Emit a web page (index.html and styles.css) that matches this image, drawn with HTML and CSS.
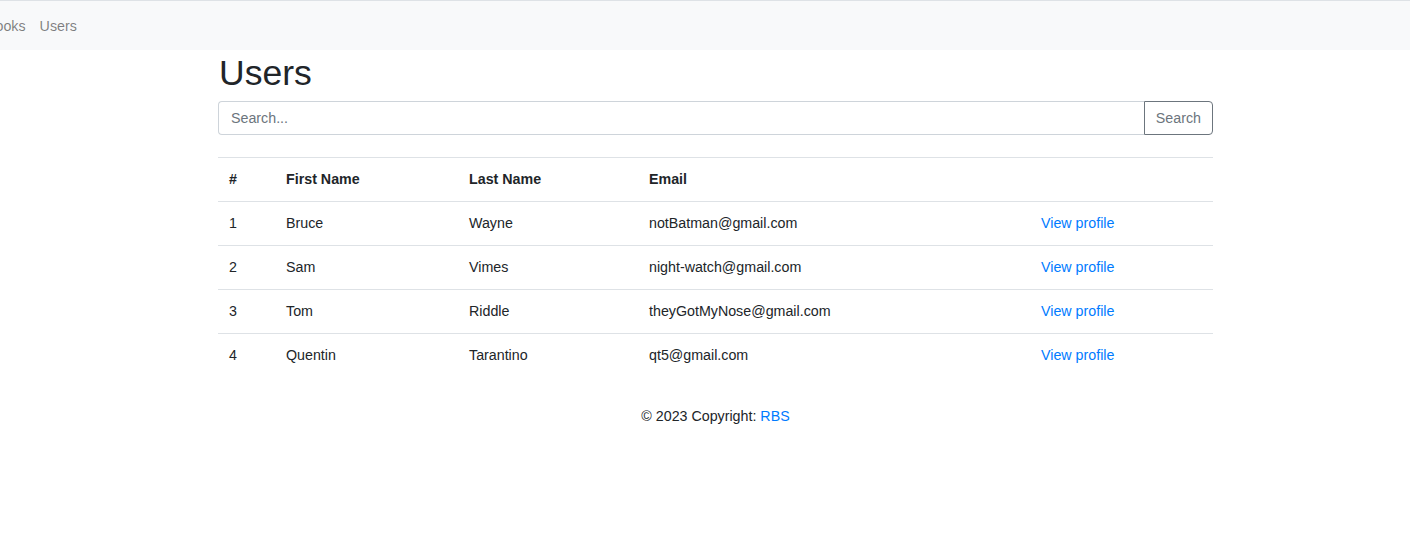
FILE: index.html
```html
<!DOCTYPE html>
<html lang="en">
<head>
<meta charset="utf-8">
<title>Users</title>
<link rel="stylesheet" href="styles.css">
</head>
<body>
<nav class="navbar">
  <ul class="nav-list">
    <li><a class="nav-link" href="#">Books</a></li>
    <li><a class="nav-link" href="#">Users</a></li>
  </ul>
</nav>
<main class="container">
  <h1 class="title">Users</h1>
  <form class="input-group">
    <input class="form-control" type="text" placeholder="Search...">
    <button class="btn-search" type="button">Search</button>
  </form>
  <table class="table">
    <thead>
      <tr>
        <th class="c-num">#</th>
        <th class="c-first">First Name</th>
        <th class="c-last">Last Name</th>
        <th class="c-email">Email</th>
        <th class="c-link"></th>
      </tr>
    </thead>
    <tbody>
      <tr><td>1</td><td>Bruce</td><td>Wayne</td><td>notBatman@gmail.com</td><td><a href="#">View profile</a></td></tr>
      <tr><td>2</td><td>Sam</td><td>Vimes</td><td>night-watch@gmail.com</td><td><a href="#">View profile</a></td></tr>
      <tr><td>3</td><td>Tom</td><td>Riddle</td><td>theyGotMyNose@gmail.com</td><td><a href="#">View profile</a></td></tr>
      <tr><td>4</td><td>Quentin</td><td>Tarantino</td><td>qt5@gmail.com</td><td><a href="#">View profile</a></td></tr>
    </tbody>
  </table>
  <footer class="footer">© 2023 Copyright: <a href="#">RBS</a></footer>
</main>
</body>
</html>
```

FILE: styles.css
```css
* { box-sizing: border-box; }
html, body {
  margin: 0;
  padding: 0;
  background: #fff;
  color: #212529;
  font-family: "Liberation Sans", Arial, sans-serif;
  font-size: 14.25px;
  line-height: 1.5;
  overflow: hidden;
}
a { color: #007bff; text-decoration: none; }

.navbar {
  height: 50px;
  background: #f8f9fa;
  border-top: 1px solid #dee2e6;
  display: flex;
  align-items: center;
  overflow: hidden;
}
.nav-list {
  list-style: none;
  margin: 2px 0 0 -21px;
  padding: 0;
  display: flex;
}
.nav-link {
  display: block;
  padding: 4px 7px;
  color: rgba(0, 0, 0, 0.5);
  font-size: 14.25px;
}

.container {
  width: 995px;
  margin-left: 218px;
}
.title {
  margin: 2px 0 6px 1px;
  font-size: 35.5px;
  font-weight: 400;
  line-height: 1.2;
  color: #212529;
}
.input-group {
  display: flex;
  margin: 0 0 22px;
}
.form-control {
  flex: 1;
  height: 34px;
  margin: 0;
  padding: 0 12px;
  font-family: inherit;
  font-size: 14.25px;
  color: #495057;
  border: 1px solid #ced4da;
  border-right: none;
  border-radius: 4px 0 0 4px;
  outline: none;
}
.form-control::placeholder { color: #6c757d; }
.btn-search {
  height: 34px;
  padding: 0 11px;
  font-family: inherit;
  font-size: 14.25px;
  color: #6c757d;
  background: #fff;
  border: 1px solid #6c757d;
  border-radius: 0 4px 4px 0;
}

.table {
  width: 100%;
  border-collapse: collapse;
  table-layout: fixed;
}
.table th, .table td {
  height: 44px;
  padding: 1px 11px 0;
  text-align: left;
  vertical-align: middle;
  border-top: 1px solid #dee2e6;
  font-size: 14.25px;
}
.table th { font-weight: 700; }
.c-num { width: 57px; }
.c-first { width: 183px; }
.c-last { width: 180px; }
.c-email { width: 392px; }
.c-link { width: 183px; }

.footer {
  text-align: center;
  padding-top: 29px;
  font-size: 14.25px;
}
```
